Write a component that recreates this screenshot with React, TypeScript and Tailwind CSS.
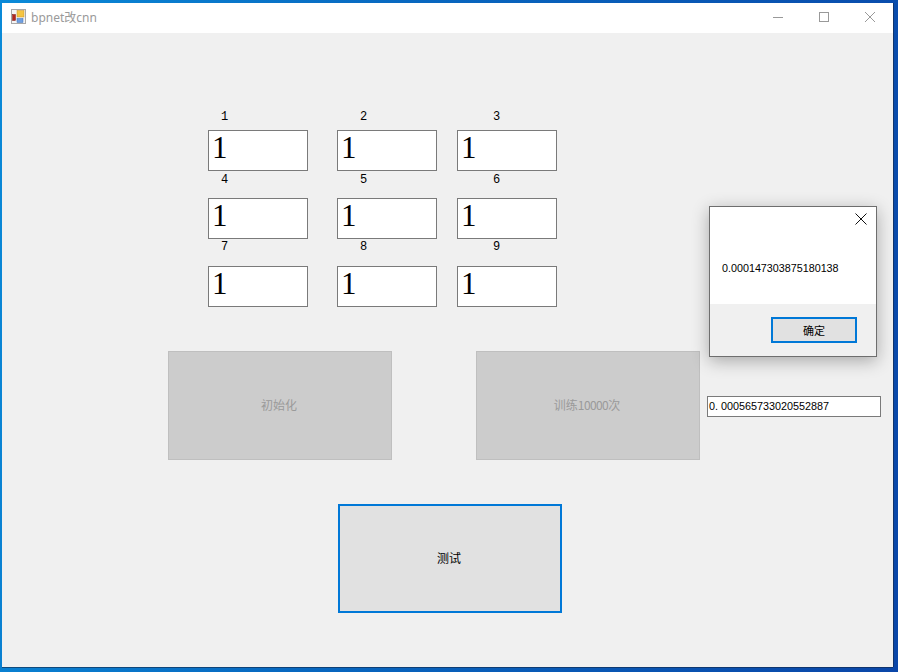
import React from 'react';

const SIMSUN = "font-['Liberation_Mono','Noto_Sans_CJK_SC',monospace]";

const cells = [
  { label: '1', labelClass: 'pl-[13px]', rowClass: 'mb-[7px]' },
  { label: '2', labelClass: 'pl-[23px]', rowClass: 'mb-[7px]' },
  { label: '3', labelClass: 'pl-[36px]', rowClass: 'mb-[7px]' },
  { label: '4', labelClass: 'pl-[13px]', rowClass: 'mt-[2px] mb-[12px]' },
  { label: '5', labelClass: 'pl-[23px]', rowClass: 'mt-[2px] mb-[12px]' },
  { label: '6', labelClass: 'pl-[36px]', rowClass: 'mt-[2px] mb-[12px]' },
  { label: '7', labelClass: 'pl-[13px]', rowClass: 'mt-[1px] mb-[13px]' },
  { label: '8', labelClass: 'pl-[23px]', rowClass: 'mt-[1px] mb-[13px]' },
  { label: '9', labelClass: 'pl-[36px]', rowClass: 'mt-[1px] mb-[13px]' },
];

function AppIcon() {
  return (
    <svg width="16" height="16" viewBox="0 0 16 16" className="shrink-0">
      <rect x="0.5" y="0.5" width="14" height="14" fill="#f4f4f4" stroke="#a8a8a8" />
      <rect x="1.5" y="5.5" width="3" height="6" fill="#b3261e" stroke="#7c1a14" strokeWidth="0.5" />
      <rect x="6" y="1.5" width="7" height="6.5" fill="#f5c542" stroke="#c8922a" strokeWidth="0.5" />
      <rect x="6" y="9.5" width="6" height="4" fill="#6f9fe0" stroke="#3f6fb8" strokeWidth="0.5" />
    </svg>
  );
}

function TitleBar() {
  return (
    <div className="h-[30px] bg-white flex items-center shrink-0">
      <div className="ml-[9px] mt-[-2px] flex items-center">
        <AppIcon />
        <span className="ml-[4px] mt-[1px] text-[12px] text-[#9a9a9a] font-['Noto_Sans','Noto_Sans_CJK_SC',sans-serif]">bpnet改cnn</span>
      </div>
      <div className="ml-auto flex items-center mt-[-3px]">
        <svg width="12" height="12" viewBox="0 0 12 12" className="mr-[34px]">
          <path d="M1 6.5H11" stroke="#999" strokeWidth="1" />
        </svg>
        <svg width="12" height="12" viewBox="0 0 12 12" className="mr-[34px]">
          <rect x="1.5" y="1.5" width="9" height="9" fill="none" stroke="#999" strokeWidth="1" />
        </svg>
        <svg width="12" height="12" viewBox="0 0 12 12" className="mr-[17px]">
          <path d="M1 1L11 11M11 1L1 11" stroke="#999" strokeWidth="1" />
        </svg>
      </div>
    </div>
  );
}

function Dialog() {
  return (
    <div className="absolute left-[707px] top-[173px] w-[168px] h-[151px] border border-[#6e6e6e] bg-white shadow-[0_4px_16px_rgba(0,0,0,0.3)] flex flex-col">
      <div className="flex-1 relative">
        <svg width="12" height="12" viewBox="0 0 12 12" className="absolute right-[9px] top-[6px]">
          <path d="M0.5 0.5L11.5 11.5M11.5 0.5L0.5 11.5" stroke="#111" strokeWidth="1" />
        </svg>
        <p className="pl-[12px] pt-[54px] text-[10.75px] leading-[14px] text-black font-['Liberation_Sans',sans-serif]">0.000147303875180138</p>
      </div>
      <div className="h-[52px] bg-[#f0f0f0] flex items-start justify-end pt-[13px] pr-[19px]">
        <button className="w-[86px] h-[26px] border-2 border-[#0078d7] bg-[#e1e1e1] text-[11px] text-black font-['Noto_Sans_CJK_SC',sans-serif]">确定</button>
      </div>
    </div>
  );
}

export default function App() {
  return (
    <div className="w-[898px] h-[672px] pt-[3px] pl-[2px] pr-[5px] pb-[5px] flex flex-col bg-[linear-gradient(100deg,#0a8ad8_0%,#0868c0_40%,#0a46a8_100%)]">
      <div className="flex-1 flex flex-col shadow-[0_1px_0_rgba(20,40,70,0.6),1px_0_0_rgba(20,40,70,0.6)]">
        <TitleBar />
        <div className="flex-1 relative bg-[#f0f0f0] pt-[77px]">
          <div className="ml-[206px] grid grid-cols-[129px_120px_100px]">
            {cells.map((c) => (
              <div key={c.label}>
                <div className={`h-[13px] text-[12px] leading-[15px] text-black tracking-[-1.2px] ${SIMSUN} ${c.labelClass} ${c.rowClass}`}>{c.label}</div>
                <div className="w-[100px] h-[41px] border border-[#7a7a7a] bg-white pl-[3px] text-[31px] leading-[34px] text-black font-['Liberation_Serif',serif]">1</div>
              </div>
            ))}
          </div>

          <div className="ml-[166px] mt-[44px] flex items-start">
            <button className="w-[224px] h-[109px] border border-[#bfbfbf] bg-[#cccccc] pr-[2px] pb-[2px] text-[12px] text-[#9a9a9a] font-['Noto_Sans_CJK_SC',sans-serif]">初始化</button>
            <button className="ml-[84px] w-[224px] h-[109px] border border-[#bfbfbf] bg-[#cccccc] pr-[2px] pb-[2px] text-[12px] text-[#9a9a9a] font-['Noto_Sans_CJK_SC',sans-serif]">训练<span className="tracking-[-0.6px]">10000</span>次</button>
            <div className="ml-[7px] mt-[45px] w-[174px] h-[21px] border border-[#7a7a7a] bg-white pl-[1px] text-[10.8px] leading-[18px] text-black whitespace-pre font-['Liberation_Sans',sans-serif]">0. 000565733020552887</div>
          </div>

          <button className="block ml-[336px] mt-[44px] w-[224px] h-[109px] border-2 border-[#0078d7] bg-[#e1e1e1] pr-[2px] pb-[2px] text-[12px] text-black font-['Noto_Sans_CJK_SC',sans-serif]">测试</button>

          <Dialog />
        </div>
      </div>
    </div>
  );
}
